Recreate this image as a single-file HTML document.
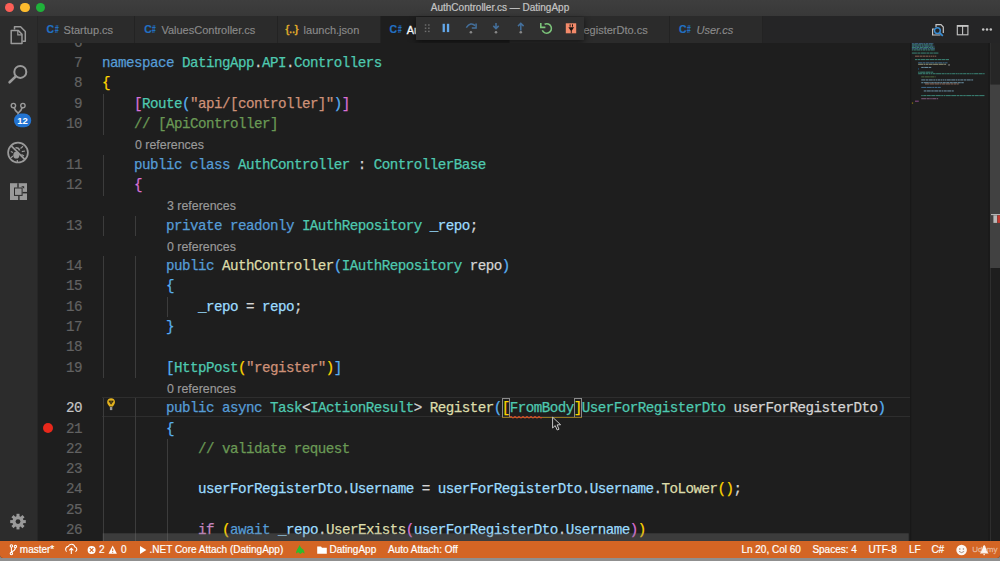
<!DOCTYPE html>
<html><head><meta charset="utf-8">
<style>
*{box-sizing:border-box}
html,body{margin:0;padding:0;width:1000px;height:561px;overflow:hidden;background:#8f8f8f;font-family:"Liberation Sans",sans-serif}
.abs{position:absolute}
svg{position:absolute;overflow:visible}
#win{position:absolute;left:0;top:0;width:1000px;height:558px;background:#1e1e1e;border-radius:0 0 3px 3px;overflow:hidden}
#title{left:0;top:0;width:1000px;height:16px;background:linear-gradient(#3e3e3e,#383838);color:#c4c4c4;font-size:10px;text-align:center;line-height:15px;-webkit-text-stroke:0.2px}
.tl{position:absolute;top:2.5px;width:9.6px;height:9.6px;border-radius:50%}
#act{left:0;top:16px;width:38px;height:525px;background:#2c2c2c;border-right:1px solid #262626}
#tabs{left:38px;top:16px;width:962px;height:27px;background:#252526}
.tab{position:absolute;top:0;height:27px;background:#2b2b2b;border-right:1px solid #232323;color:#8a8a8a;font-size:11px;line-height:29px;white-space:nowrap;overflow:hidden;-webkit-text-stroke:0.15px}
.tab .ic{position:absolute;top:0;font-size:10.5px;font-weight:bold;color:#2270c2;font-style:normal;letter-spacing:-0.4px;line-height:27.6px;-webkit-text-stroke:0.2px}
.tab .tx{position:absolute}
#editor{left:38px;top:43px;width:952px;height:498px;background:#1e1e1e;overflow:hidden}
.row{position:absolute;left:0;height:20.3px;line-height:20.3px;white-space:pre;font-family:"Liberation Mono",monospace;font-size:14.2px;letter-spacing:-0.52px;color:#d4d4d4;-webkit-text-stroke:0.25px}
.ln{position:absolute;left:0;width:44px;text-align:right;height:20.3px;line-height:20.3px;font-family:"Liberation Mono",monospace;font-size:14.2px;letter-spacing:-0.52px;color:#626262;-webkit-text-stroke:0.2px}
.lens{position:absolute;height:20.3px;line-height:22px;font-size:12.4px;color:#9a9a9a;white-space:pre;-webkit-text-stroke:0.15px}
.g{position:absolute;width:1px;background:#3c3c3c}
.k{color:#569cd6;-webkit-text-stroke-color:#569cd6}.t{color:#4ec9b0}.f{color:#dcdcaa}.v{color:#9cdcfe}.s{color:#ce9178}.c{color:#6a9955}.p{color:#c586c0}.w{color:#d4d4d4}
.y{color:#ffd700}.o{color:#da70d6}.b{color:#58b0f2}
#status{left:0;top:541px;width:1000px;height:17px;background:#d46524;color:#fff;font-size:10px;line-height:18.6px;white-space:nowrap}
#status .st{position:absolute;top:0;-webkit-text-stroke:0.2px}
</style></head><body>
<div id="win">

<!-- title bar -->
<div id="title" class="abs">AuthController.cs — DatingApp</div>
<div class="tl" style="left:4.6px;background:#fc5f57"></div>
<div class="tl" style="left:20.2px;background:#fdbc2e"></div>
<div class="tl" style="left:35.8px;background:#1fb23a"></div>

<!-- activity bar -->
<div id="act" class="abs"></div>

<svg width="38" height="525" style="left:0;top:0" viewBox="0 0 38 525">
</svg>
<svg width="1000" height="561" style="left:0;top:0;pointer-events:none">
  <!-- files -->
  <path d="M14.5,29.5 V26.8 H20.6 L25.3,31.5 V41.3 H22.5" fill="none" stroke="#9a9a9a" stroke-width="1.5" stroke-linejoin="round"/>
  <path d="M11.2,30.6 H18.4 L22,34.2 V43.4 H11.2 Z" fill="none" stroke="#9a9a9a" stroke-width="1.5" stroke-linejoin="round"/>
  <path d="M17.8,30.6 V34.8 H22" fill="none" stroke="#9a9a9a" stroke-width="1.2"/>
  <!-- search -->
  <circle cx="20.3" cy="71.9" r="6" fill="none" stroke="#9a9a9a" stroke-width="2"/>
  <path d="M15.8,76.4 L9.6,82.3" stroke="#9a9a9a" stroke-width="2.6" stroke-linecap="round"/>
  <!-- scm -->
  <circle cx="13.4" cy="105.6" r="2.2" fill="none" stroke="#9a9a9a" stroke-width="1.4"/>
  <circle cx="22.9" cy="105.6" r="2.2" fill="none" stroke="#9a9a9a" stroke-width="1.4"/>
  <path d="M14.2,107.8 Q15,111 18.1,113.2 M22.1,107.8 Q21.3,111 18.1,113.2 V118" fill="none" stroke="#9a9a9a" stroke-width="1.6"/>
  <rect x="14" y="113.6" width="17.2" height="13.6" rx="6.8" fill="#2374d2"/>
  <text x="22.6" y="124.2" font-family="Liberation Sans" font-weight="bold" font-size="9.5" fill="#fff" text-anchor="middle">12</text>
  <!-- debug -->
  <circle cx="18" cy="152.6" r="9.9" fill="none" stroke="#9a9a9a" stroke-width="1.7"/>
  <path d="M11,145.6 L25,159.6" stroke="#9a9a9a" stroke-width="1.7"/>
  <ellipse cx="16.3" cy="155.2" rx="3" ry="3.4" fill="#9a9a9a"/>
  <path d="M19.5,150.5 a3,3 0 0 0 -4,-2.5" fill="none" stroke="#9a9a9a" stroke-width="1.6"/>
  <path d="M20.5,148.5 L23,146.2 M21.8,151.6 L25,151 M21.5,154.5 L24,156 M13,152.5 L10.8,151.5 M12.8,156 L11,157.8 M17.2,160 L17.5,162" stroke="#9a9a9a" stroke-width="1.2"/>
  <!-- extensions -->
  <rect x="10" y="183.2" width="17" height="16.8" fill="#9a9a9a"/>
  <rect x="14" y="187.5" width="8.6" height="8.4" fill="#2c2c2c"/>
  <rect x="15" y="188.5" width="6.6" height="6.4" fill="#9a9a9a"/>
  <rect x="17.3" y="183.2" width="1.4" height="4.5" fill="#2c2c2c"/>
  <rect x="18.2" y="195.8" width="1.4" height="4.2" fill="#2c2c2c"/>
  <rect x="22.5" y="191.9" width="4.5" height="1.5" fill="#2c2c2c"/>
  <path d="M21.2,186.2 H24.2 V188.8 Z" fill="#2c2c2c"/>
  <!-- gear -->
  <g transform="translate(18,521.6)" fill="#9a9a9a">
    <circle r="5.6"/>
    <rect x="-1.5" y="-7.8" width="3" height="3.5" transform="rotate(0)"/><rect x="-1.5" y="-7.8" width="3" height="3.5" transform="rotate(45)"/><rect x="-1.5" y="-7.8" width="3" height="3.5" transform="rotate(90)"/><rect x="-1.5" y="-7.8" width="3" height="3.5" transform="rotate(135)"/><rect x="-1.5" y="-7.8" width="3" height="3.5" transform="rotate(180)"/><rect x="-1.5" y="-7.8" width="3" height="3.5" transform="rotate(225)"/><rect x="-1.5" y="-7.8" width="3" height="3.5" transform="rotate(270)"/><rect x="-1.5" y="-7.8" width="3" height="3.5" transform="rotate(315)"/>
    <circle r="2.4" fill="#2c2c2c"/>
  </g>
</svg>


<!-- tabs -->
<div id="tabs" class="abs">
  <div class="tab" style="left:0;width:97.4px"><span class="ic" style="left:8.6px">C<i style="display:inline-block;transform:scaleX(0.62);transform-origin:0 50%;font-style:normal;margin-left:1px">#</i></span><span class="tx" style="left:25.6px">Startup.cs</span></div>
  <div class="tab" style="left:97.4px;width:142.2px"><span class="ic" style="left:8.8px">C<i style="display:inline-block;transform:scaleX(0.62);transform-origin:0 50%;font-style:normal;margin-left:1px">#</i></span><span class="tx" style="left:26px">ValuesController.cs</span></div>
  <div class="tab" style="left:239.6px;width:103.1px"><span class="ic" style="left:8px;color:#e0ae2a;font-size:11px;letter-spacing:-0.2px;font-weight:normal;-webkit-text-stroke:0.5px">{..}</span><span class="tx" style="left:26px">launch.json</span></div>
  <div class="tab" style="left:342.7px;width:129.1px;background:#1e1e1e;color:#fff;-webkit-text-stroke:0.35px"><span class="ic" style="left:8.8px">C<i style="display:inline-block;transform:scaleX(0.62);transform-origin:0 50%;font-style:normal;margin-left:1px">#</i></span><span class="tx" style="left:26px">AuthController.cs</span></div>
  <div class="tab" style="left:471.8px;width:160.3px"><span class="ic" style="left:8.8px">C<i style="display:inline-block;transform:scaleX(0.62);transform-origin:0 50%;font-style:normal;margin-left:1px">#</i></span><span class="tx" style="left:26px">UserForRegisterDto.cs</span></div>
  <div class="tab" style="left:632.1px;width:93.1px;font-style:italic"><span class="ic" style="left:9px">C<i style="display:inline-block;transform:scaleX(0.62);transform-origin:0 50%;font-style:normal;margin-left:1px">#</i></span><span class="tx" style="left:26.4px">User.cs</span></div>
</div>

<svg width="1000" height="60" style="left:0;top:0">
  <path d="M936,27 V24.6 H941 L943.3,27 V33" fill="none" stroke="#c5c5c5" stroke-width="1.2"/>
  <path d="M932.6,29 H934 M932.6,28.5 V35 H940.5" fill="none" stroke="#c5c5c5" stroke-width="1.2"/>
  <circle cx="937.4" cy="30.6" r="2.9" fill="none" stroke="#3a8fd6" stroke-width="1.4"/>
  <path d="M939.5,32.7 L942.8,35.8" stroke="#3a8fd6" stroke-width="1.7"/>
  <rect x="957.3" y="25.6" width="10.6" height="9.2" fill="none" stroke="#c5c5c5" stroke-width="1.1"/>
  <rect x="957" y="25" width="11.2" height="1.8" fill="#c5c5c5"/>
  <path d="M962.6,26 V34.8" stroke="#c5c5c5" stroke-width="1.1"/>
  <circle cx="983.2" cy="29.6" r="1.25" fill="#c5c5c5"/>
  <circle cx="987" cy="29.6" r="1.25" fill="#c5c5c5"/>
  <circle cx="990.8" cy="29.6" r="1.25" fill="#c5c5c5"/>
</svg>


<div class="abs" style="left:415.5px;top:16.6px;width:168.2px;height:23.8px;background:#303030;box-shadow:0 2px 6px rgba(0,0,0,0.55)"></div>
<svg width="1000" height="60" style="left:0;top:0">
  <g fill="#707070">
    <rect x="424.8" y="24.3" width="1.5" height="1.4"/><rect x="428.1" y="24.3" width="1.5" height="1.4"/>
    <rect x="424.8" y="27.5" width="1.5" height="1.4"/><rect x="428.1" y="27.5" width="1.5" height="1.4"/>
    <rect x="424.8" y="30.7" width="1.5" height="1.4"/><rect x="428.1" y="30.7" width="1.5" height="1.4"/>
  </g>
  <rect x="442.6" y="23.8" width="2.3" height="8.3" fill="#62a8ec"/>
  <rect x="446.9" y="23.8" width="2.3" height="8.3" fill="#62a8ec"/>
  <g fill="none" stroke="#44709c" stroke-width="1.5">
  <path d="M466.3,27.6 Q470.6,21.4 475.2,25.6"/>
  <path d="M476.1,23.4 V27.9 H471.8"/>
  <path d="M496,22.9 V28.4 M493.3,25.9 L496,28.6 L498.7,25.9"/>
  <path d="M520.8,23.6 V30.4 M518,26.1 L520.8,23.3 L523.6,26.1"/>
  </g>
  <circle cx="470.9" cy="32.2" r="1.3" fill="#888"/>
  <circle cx="496" cy="32.2" r="1.3" fill="#888"/>
  <circle cx="520.8" cy="32.2" r="1.3" fill="#888"/>
  <!-- restart -->
  <path d="M542.3,30.3 A4.75,4.75 0 1 0 544.6,24.2" fill="none" stroke="#7cc47a" stroke-width="1.6"/>
  <path d="M540.8,23 V27.4 H545.4" fill="none" stroke="#7cc47a" stroke-width="1.6"/>
  <!-- disconnect -->
  <rect x="565.8" y="23.3" width="10.4" height="10" fill="#f38a6a"/>
  <rect x="569.6" y="24.4" width="1" height="2.2" fill="#1a1210"/><rect x="572" y="24.4" width="1" height="2.2" fill="#1a1210"/>
  <path d="M568.4,27.2 H574.1 L571.25,31.6 Z" fill="#1a1210"/>
  <rect x="570.8" y="31" width="0.9" height="2.3" fill="#1a1210"/>
</svg>


<!-- editor -->
<div id="editor" class="abs">
<div class="abs" style="left:64px;top:354px;width:808px;height:20px;border-top:1px solid #2e2e2e;border-bottom:1px solid #2e2e2e"></div>
<div class="g" style="left:64.5px;top:50.75px;height:20.6px"></div>
<div class="g" style="left:64.5px;top:71.05px;height:20.6px"></div>
<div class="g" style="left:64.5px;top:111.65px;height:20.6px"></div>
<div class="g" style="left:64.5px;top:131.95px;height:20.6px"></div>
<div class="g" style="left:64.5px;top:172.55px;height:20.6px"></div>
<div class="g" style="left:96.5px;top:172.55px;height:20.6px"></div>
<div class="g" style="left:64.5px;top:213.15px;height:20.6px"></div>
<div class="g" style="left:96.5px;top:213.15px;height:20.6px"></div>
<div class="g" style="left:64.5px;top:233.45px;height:20.6px"></div>
<div class="g" style="left:96.5px;top:233.45px;height:20.6px"></div>
<div class="g" style="left:64.5px;top:253.75px;height:20.6px"></div>
<div class="g" style="left:96.5px;top:253.75px;height:20.6px"></div>
<div class="g" style="left:128.5px;top:253.75px;height:20.6px"></div>
<div class="g" style="left:64.5px;top:274.05px;height:20.6px"></div>
<div class="g" style="left:96.5px;top:274.05px;height:20.6px"></div>
<div class="g" style="left:64.5px;top:294.35px;height:20.6px"></div>
<div class="g" style="left:96.5px;top:294.35px;height:20.6px"></div>
<div class="g" style="left:64.5px;top:314.65px;height:20.6px"></div>
<div class="g" style="left:96.5px;top:314.65px;height:20.6px"></div>
<div class="g" style="left:64.5px;top:355.25px;height:20.6px"></div>
<div class="g" style="left:96.5px;top:355.25px;height:20.6px"></div>
<div class="g" style="left:64.5px;top:375.55px;height:20.6px"></div>
<div class="g" style="left:96.5px;top:375.55px;height:20.6px"></div>
<div class="g" style="left:64.5px;top:395.85px;height:20.6px"></div>
<div class="g" style="left:96.5px;top:395.85px;height:20.6px"></div>
<div class="g" style="left:128.5px;top:395.85px;height:20.6px"></div>
<div class="g" style="left:64.5px;top:416.15px;height:20.6px"></div>
<div class="g" style="left:96.5px;top:416.15px;height:20.6px"></div>
<div class="g" style="left:128.5px;top:416.15px;height:20.6px"></div>
<div class="g" style="left:64.5px;top:436.45px;height:20.6px"></div>
<div class="g" style="left:96.5px;top:436.45px;height:20.6px"></div>
<div class="g" style="left:128.5px;top:436.45px;height:20.6px"></div>
<div class="g" style="left:64.5px;top:456.75px;height:20.6px"></div>
<div class="g" style="left:96.5px;top:456.75px;height:20.6px"></div>
<div class="g" style="left:128.5px;top:456.75px;height:20.6px"></div>
<div class="g" style="left:64.5px;top:477.05px;height:20.6px"></div>
<div class="g" style="left:96.5px;top:477.05px;height:20.6px"></div>
<div class="g" style="left:128.5px;top:477.05px;height:20.6px"></div>
<div class="ln" style="top:-10.15px;">6</div>
<div class="ln" style="top:10.15px;">7</div>
<div class="row" style="left:64px;top:10.15px"><span class=k>namespace</span> <span class=t>DatingApp</span>.<span class=t>API</span>.<span class=t>Controllers</span></div>
<div class="ln" style="top:30.45px;">8</div>
<div class="row" style="left:64px;top:30.45px"><span class=y>{</span></div>
<div class="ln" style="top:50.75px;">9</div>
<div class="row" style="left:64px;top:50.75px">    <span class=o>[</span><span class=t>Route</span><span class=b>(</span><span class=s>"api/[controller]"</span><span class=b>)</span><span class=o>]</span></div>
<div class="ln" style="top:71.05px;">10</div>
<div class="row" style="left:64px;top:71.05px">    <span class=c>// [ApiController]</span></div>
<div class="lens" style="left:97.0px;top:91.35px">0 references</div>
<div class="ln" style="top:111.65px;">11</div>
<div class="row" style="left:64px;top:111.65px">    <span class=k>public</span> <span class=k>class</span> <span class=t>AuthController</span> : <span class=t>ControllerBase</span></div>
<div class="ln" style="top:131.95px;">12</div>
<div class="row" style="left:64px;top:131.95px">    <span class=o>{</span></div>
<div class="lens" style="left:129.0px;top:152.25px">3 references</div>
<div class="ln" style="top:172.55px;">13</div>
<div class="row" style="left:64px;top:172.55px">        <span class=k>private</span> <span class=k>readonly</span> <span class=t>IAuthRepository</span> <span class=v>_repo</span>;</div>
<div class="lens" style="left:129.0px;top:192.85px">0 references</div>
<div class="ln" style="top:213.15px;">14</div>
<div class="row" style="left:64px;top:213.15px">        <span class=k>public</span> <span class=f>AuthController</span><span class=b>(</span><span class=t>IAuthRepository</span> <span class=w>repo</span><span class=b>)</span></div>
<div class="ln" style="top:233.45px;">15</div>
<div class="row" style="left:64px;top:233.45px">        <span class=b>{</span></div>
<div class="ln" style="top:253.75px;">16</div>
<div class="row" style="left:64px;top:253.75px">            <span class=v>_repo</span> = <span class=v>repo</span>;</div>
<div class="ln" style="top:274.05px;">17</div>
<div class="row" style="left:64px;top:274.05px">        <span class=b>}</span></div>
<div class="ln" style="top:294.35px;">18</div>
<div class="ln" style="top:314.65px;">19</div>
<div class="row" style="left:64px;top:314.65px">        <span class=b>[</span><span class=t>HttpPost</span><span class=y>(</span><span class=s>"register"</span><span class=y>)</span><span class=b>]</span></div>
<div class="lens" style="left:129.0px;top:334.95px">0 references</div>
<div class="ln" style="top:355.25px;color:#c6c6c6">20</div>
<div class="row" style="left:64px;top:355.25px">        <span class=k>public</span> <span class=k>async</span> <span class=t>Task</span>&lt;<span class=t>IActionResult</span>&gt; <span class=f>Register</span><span class=b>(</span><span class=y>[</span><span class=t>FromBody</span><span class=y>]</span><span class=t>UserForRegisterDto</span> <span class=w>userForRegisterDto</span><span class=b>)</span></div>
<div class="ln" style="top:375.55px;">21</div>
<div class="row" style="left:64px;top:375.55px">        <span class=b>{</span></div>
<div class="ln" style="top:395.85px;">22</div>
<div class="row" style="left:64px;top:395.85px">            <span class=c>// validate request</span></div>
<div class="ln" style="top:416.15px;">23</div>
<div class="ln" style="top:436.45px;">24</div>
<div class="row" style="left:64px;top:436.45px">            <span class=v>userForRegisterDto</span>.<span class=v>Username</span> = <span class=v>userForRegisterDto</span>.<span class=v>Username</span>.<span class=f>ToLower</span><span class=y>()</span>;</div>
<div class="ln" style="top:456.75px;">25</div>
<div class="ln" style="top:477.05px;">26</div>
<div class="row" style="left:64px;top:477.05px">            <span class=p>if</span> <span class=y>(</span><span class=k>await</span> <span class=v>_repo</span>.<span class=f>UserExists</span><span class=o>(</span><span class=v>userForRegisterDto</span>.<span class=v>Username</span><span class=o>)</span><span class=y>)</span></div>
<div class="abs" style="left:4.600000000000001px;top:380px;width:10px;height:10px;border-radius:50%;background:#e8281b"></div>
<svg width="1000" height="561" style="left:-38px;top:-43px"><path d="M108.5,405.2 C106.4,403.2 106.6,398.3 111.1,398.3 C115.6,398.3 115.8,403.2 113.7,405.2 L112.9,406.5 H109.3 Z" fill="#e3b21e"/><path d="M108.9,400.9 H113.3 L111.1,404.3 Z" fill="#2a2412" stroke="#2a2412" stroke-width="0.6" stroke-linejoin="round"/><circle cx="111.1" cy="401.9" r="0.55" fill="#b89020"/><rect x="109.9" y="407" width="2.4" height="3.1" fill="#9a9a9a"/></svg>
<div class="abs" style="left:464.2px;top:354.5px;width:8px;height:20px;border:1px solid #8a8a8a"></div>
<div class="abs" style="left:536.2px;top:354.5px;width:7.6px;height:20px;border:1px solid #8a8a8a"></div>
<div class="abs" style="left:464.2px;top:374px;width:79.4px;height:1px;background:#917520"></div>
<svg width="1000" height="561" style="left:-38px;top:-43px"><path d="M510,417.2 q1,-1.4 2,0 q1,1.4 2,0 q1,-1.4 2,0 q1,1.4 2,0 q1,-1.4 2,0 q1,1.4 2,0 q1,-1.4 2,0 q1,1.4 2,0 q1,-1.4 2,0 q1,1.4 2,0 q1,-1.4 2,0 q1,1.4 2,0 q1,-1.4 2,0 q1,1.4 2,0 q1,-1.4 2,0 q1,1.4 2,0" fill="none" stroke="#d9482b" stroke-width="1.1"/></svg>
</div>
<svg width="1000" height="561" style="left:0;top:0">
<rect x="910" y="43" width="1.2" height="498" fill="#181818"/>
<rect x="911.88" y="43.15" width="2.00" height="1.1" fill="#569cd6" opacity="0.55"/>
<rect x="914.38" y="43.15" width="4.00" height="1.1" fill="#569cd6" opacity="0.55"/>
<rect x="918.88" y="43.15" width="4.00" height="1.1" fill="#569cd6" opacity="0.55"/>
<rect x="923.38" y="43.15" width="2.00" height="1.1" fill="#569cd6" opacity="0.55"/>
<rect x="925.88" y="43.15" width="2.50" height="1.1" fill="#569cd6" opacity="0.55"/>
<rect x="928.88" y="43.15" width="4.00" height="1.1" fill="#569cd6" opacity="0.55"/>
<rect x="933.38" y="43.15" width="0.38" height="1.1" fill="#569cd6" opacity="0.55"/>
<rect x="911.88" y="44.40" width="5.00" height="1.1" fill="#4ec9b0" opacity="0.55"/>
<rect x="917.38" y="44.40" width="4.00" height="1.1" fill="#4ec9b0" opacity="0.55"/>
<rect x="921.88" y="44.40" width="1.50" height="1.1" fill="#4ec9b0" opacity="0.55"/>
<rect x="923.88" y="44.40" width="4.00" height="1.1" fill="#4ec9b0" opacity="0.55"/>
<rect x="928.38" y="44.40" width="1.50" height="1.1" fill="#4ec9b0" opacity="0.55"/>
<rect x="930.38" y="44.40" width="2.12" height="1.1" fill="#4ec9b0" opacity="0.55"/>
<rect x="911.88" y="45.65" width="2.50" height="1.1" fill="#569cd6" opacity="0.55"/>
<rect x="914.88" y="45.65" width="4.00" height="1.1" fill="#569cd6" opacity="0.55"/>
<rect x="919.38" y="45.65" width="2.00" height="1.1" fill="#569cd6" opacity="0.55"/>
<rect x="921.88" y="45.65" width="2.00" height="1.1" fill="#569cd6" opacity="0.55"/>
<rect x="924.38" y="45.65" width="5.00" height="1.1" fill="#569cd6" opacity="0.55"/>
<rect x="929.88" y="45.65" width="3.00" height="1.1" fill="#569cd6" opacity="0.55"/>
<rect x="933.38" y="45.65" width="1.00" height="1.1" fill="#569cd6" opacity="0.55"/>
<rect x="911.88" y="46.90" width="4.00" height="1.1" fill="#4ec9b0" opacity="0.55"/>
<rect x="916.38" y="46.90" width="3.00" height="1.1" fill="#4ec9b0" opacity="0.55"/>
<rect x="919.88" y="46.90" width="3.00" height="1.1" fill="#4ec9b0" opacity="0.55"/>
<rect x="923.38" y="46.90" width="5.00" height="1.1" fill="#4ec9b0" opacity="0.55"/>
<rect x="928.88" y="46.90" width="2.00" height="1.1" fill="#4ec9b0" opacity="0.55"/>
<rect x="931.38" y="46.90" width="2.00" height="1.1" fill="#4ec9b0" opacity="0.55"/>
<rect x="933.88" y="46.90" width="0.50" height="1.1" fill="#4ec9b0" opacity="0.55"/>
<rect x="911.88" y="48.15" width="2.00" height="1.1" fill="#569cd6" opacity="0.55"/>
<rect x="914.38" y="48.15" width="4.00" height="1.1" fill="#569cd6" opacity="0.55"/>
<rect x="918.88" y="48.15" width="3.00" height="1.1" fill="#569cd6" opacity="0.55"/>
<rect x="922.38" y="48.15" width="5.00" height="1.1" fill="#569cd6" opacity="0.55"/>
<rect x="927.88" y="48.15" width="1.50" height="1.1" fill="#569cd6" opacity="0.55"/>
<rect x="929.88" y="48.15" width="5.00" height="1.1" fill="#569cd6" opacity="0.55"/>
<rect x="911.88" y="49.40" width="1.50" height="1.1" fill="#4ec9b0" opacity="0.55"/>
<rect x="913.88" y="49.40" width="2.00" height="1.1" fill="#4ec9b0" opacity="0.55"/>
<rect x="916.38" y="49.40" width="4.00" height="1.1" fill="#4ec9b0" opacity="0.55"/>
<rect x="920.88" y="49.40" width="1.50" height="1.1" fill="#4ec9b0" opacity="0.55"/>
<rect x="922.88" y="49.40" width="2.50" height="1.1" fill="#4ec9b0" opacity="0.55"/>
<rect x="925.88" y="49.40" width="1.50" height="1.1" fill="#4ec9b0" opacity="0.55"/>
<rect x="927.88" y="49.40" width="2.50" height="1.1" fill="#4ec9b0" opacity="0.55"/>
<rect x="930.88" y="49.40" width="3.00" height="1.1" fill="#4ec9b0" opacity="0.55"/>
<rect x="934.38" y="49.40" width="0.62" height="1.1" fill="#4ec9b0" opacity="0.55"/>
<rect x="911.88" y="52.52" width="5.00" height="1.1" fill="#4ec9b0" opacity="0.55"/>
<rect x="917.38" y="52.52" width="3.00" height="1.1" fill="#4ec9b0" opacity="0.55"/>
<rect x="920.88" y="52.52" width="5.00" height="1.1" fill="#4ec9b0" opacity="0.55"/>
<rect x="926.38" y="52.52" width="3.00" height="1.1" fill="#4ec9b0" opacity="0.55"/>
<rect x="929.88" y="52.52" width="3.00" height="1.1" fill="#4ec9b0" opacity="0.55"/>
<rect x="933.38" y="52.52" width="5.00" height="1.1" fill="#4ec9b0" opacity="0.55"/>
<rect x="915.00" y="55.65" width="4.00" height="1.1" fill="#ce9178" opacity="0.55"/>
<rect x="919.50" y="55.65" width="3.00" height="1.1" fill="#ce9178" opacity="0.55"/>
<rect x="923.00" y="55.65" width="2.00" height="1.1" fill="#ce9178" opacity="0.55"/>
<rect x="925.50" y="55.65" width="2.50" height="1.1" fill="#ce9178" opacity="0.55"/>
<rect x="928.50" y="55.65" width="1.50" height="1.1" fill="#ce9178" opacity="0.55"/>
<rect x="930.50" y="55.65" width="1.50" height="1.1" fill="#ce9178" opacity="0.55"/>
<rect x="932.50" y="55.65" width="2.00" height="1.1" fill="#ce9178" opacity="0.55"/>
<rect x="935.00" y="55.65" width="1.25" height="1.1" fill="#ce9178" opacity="0.55"/>
<rect x="915.00" y="59.02" width="2.00" height="1.1" fill="#4ec9b0" opacity="0.55"/>
<rect x="917.50" y="59.02" width="2.50" height="1.1" fill="#4ec9b0" opacity="0.55"/>
<rect x="920.50" y="59.02" width="5.00" height="1.1" fill="#4ec9b0" opacity="0.55"/>
<rect x="926.00" y="59.02" width="3.00" height="1.1" fill="#4ec9b0" opacity="0.55"/>
<rect x="929.50" y="59.02" width="5.00" height="1.1" fill="#4ec9b0" opacity="0.55"/>
<rect x="935.00" y="59.02" width="2.50" height="1.1" fill="#4ec9b0" opacity="0.55"/>
<rect x="938.00" y="59.02" width="3.00" height="1.1" fill="#4ec9b0" opacity="0.55"/>
<rect x="941.50" y="59.02" width="4.00" height="1.1" fill="#4ec9b0" opacity="0.55"/>
<rect x="946.00" y="59.02" width="3.00" height="1.1" fill="#4ec9b0" opacity="0.55"/>
<rect x="918.12" y="62.27" width="4.00" height="1.1" fill="#569cd6" opacity="0.55"/>
<rect x="922.62" y="62.27" width="2.50" height="1.1" fill="#569cd6" opacity="0.55"/>
<rect x="925.62" y="62.27" width="4.00" height="1.1" fill="#569cd6" opacity="0.55"/>
<rect x="930.12" y="62.27" width="4.00" height="1.1" fill="#569cd6" opacity="0.55"/>
<rect x="934.62" y="62.27" width="3.00" height="1.1" fill="#569cd6" opacity="0.55"/>
<rect x="938.12" y="62.27" width="4.00" height="1.1" fill="#569cd6" opacity="0.55"/>
<rect x="942.62" y="62.27" width="2.00" height="1.1" fill="#569cd6" opacity="0.55"/>
<rect x="945.12" y="62.27" width="2.38" height="1.1" fill="#569cd6" opacity="0.55"/>
<rect x="918.12" y="63.77" width="5.00" height="1.1" fill="#dcdcaa" opacity="0.55"/>
<rect x="923.62" y="63.77" width="1.50" height="1.1" fill="#dcdcaa" opacity="0.55"/>
<rect x="925.62" y="63.77" width="2.50" height="1.1" fill="#dcdcaa" opacity="0.55"/>
<rect x="928.62" y="63.77" width="4.00" height="1.1" fill="#dcdcaa" opacity="0.55"/>
<rect x="933.12" y="63.77" width="5.00" height="1.1" fill="#dcdcaa" opacity="0.55"/>
<rect x="938.62" y="63.77" width="5.00" height="1.1" fill="#dcdcaa" opacity="0.55"/>
<rect x="944.12" y="63.77" width="2.00" height="1.1" fill="#dcdcaa" opacity="0.55"/>
<rect x="948.12" y="64.40" width="1.88" height="1.1" fill="#d4d4d4" opacity="0.55"/>
<rect x="921.25" y="66.90" width="2.50" height="1.1" fill="#9cdcfe" opacity="0.55"/>
<rect x="924.25" y="66.90" width="4.00" height="1.1" fill="#9cdcfe" opacity="0.55"/>
<rect x="928.75" y="66.90" width="2.50" height="1.1" fill="#9cdcfe" opacity="0.55"/>
<rect x="918.12" y="68.40" width="0.88" height="1.1" fill="#179fff" opacity="0.55"/>
<rect x="918.12" y="71.65" width="1.50" height="1.1" fill="#4ec9b0" opacity="0.55"/>
<rect x="920.12" y="71.65" width="5.00" height="1.1" fill="#4ec9b0" opacity="0.55"/>
<rect x="925.62" y="71.65" width="5.00" height="1.1" fill="#4ec9b0" opacity="0.55"/>
<rect x="931.12" y="71.65" width="2.00" height="1.1" fill="#4ec9b0" opacity="0.55"/>
<rect x="933.62" y="71.65" width="0.12" height="1.1" fill="#4ec9b0" opacity="0.55"/>
<rect x="918.12" y="73.15" width="4.00" height="1.1" fill="#4ec9b0" opacity="0.55"/>
<rect x="922.62" y="73.15" width="2.50" height="1.1" fill="#4ec9b0" opacity="0.55"/>
<rect x="925.62" y="73.15" width="2.50" height="1.1" fill="#4ec9b0" opacity="0.55"/>
<rect x="928.62" y="73.15" width="1.50" height="1.1" fill="#4ec9b0" opacity="0.55"/>
<rect x="930.62" y="73.15" width="1.50" height="1.1" fill="#4ec9b0" opacity="0.55"/>
<rect x="932.62" y="73.15" width="3.00" height="1.1" fill="#4ec9b0" opacity="0.55"/>
<rect x="936.12" y="73.15" width="5.00" height="1.1" fill="#4ec9b0" opacity="0.55"/>
<rect x="941.62" y="73.15" width="3.00" height="1.1" fill="#4ec9b0" opacity="0.55"/>
<rect x="945.12" y="73.15" width="1.50" height="1.1" fill="#4ec9b0" opacity="0.55"/>
<rect x="947.12" y="73.15" width="2.50" height="1.1" fill="#4ec9b0" opacity="0.55"/>
<rect x="950.12" y="73.15" width="1.50" height="1.1" fill="#4ec9b0" opacity="0.55"/>
<rect x="952.12" y="73.15" width="3.00" height="1.1" fill="#4ec9b0" opacity="0.55"/>
<rect x="955.62" y="73.15" width="2.00" height="1.1" fill="#4ec9b0" opacity="0.55"/>
<rect x="958.12" y="73.15" width="1.50" height="1.1" fill="#4ec9b0" opacity="0.55"/>
<rect x="960.12" y="73.15" width="2.50" height="1.1" fill="#4ec9b0" opacity="0.55"/>
<rect x="963.12" y="73.15" width="3.00" height="1.1" fill="#4ec9b0" opacity="0.55"/>
<rect x="966.62" y="73.15" width="3.00" height="1.1" fill="#4ec9b0" opacity="0.55"/>
<rect x="970.12" y="73.15" width="1.50" height="1.1" fill="#4ec9b0" opacity="0.55"/>
<rect x="972.12" y="73.15" width="1.50" height="1.1" fill="#4ec9b0" opacity="0.55"/>
<rect x="974.12" y="73.15" width="4.00" height="1.1" fill="#4ec9b0" opacity="0.55"/>
<rect x="978.62" y="73.15" width="4.00" height="1.1" fill="#4ec9b0" opacity="0.55"/>
<rect x="983.12" y="73.15" width="1.50" height="1.1" fill="#4ec9b0" opacity="0.55"/>
<rect x="921.25" y="76.28" width="3.00" height="1.1" fill="#6a9955" opacity="0.55"/>
<rect x="924.75" y="76.28" width="5.00" height="1.1" fill="#6a9955" opacity="0.55"/>
<rect x="930.25" y="76.28" width="4.00" height="1.1" fill="#6a9955" opacity="0.55"/>
<rect x="934.75" y="76.28" width="0.88" height="1.1" fill="#6a9955" opacity="0.55"/>
<rect x="921.25" y="79.40" width="4.00" height="1.1" fill="#9cdcfe" opacity="0.55"/>
<rect x="925.75" y="79.40" width="2.50" height="1.1" fill="#9cdcfe" opacity="0.55"/>
<rect x="928.75" y="79.40" width="4.00" height="1.1" fill="#9cdcfe" opacity="0.55"/>
<rect x="933.25" y="79.40" width="2.00" height="1.1" fill="#9cdcfe" opacity="0.55"/>
<rect x="935.75" y="79.40" width="1.50" height="1.1" fill="#9cdcfe" opacity="0.55"/>
<rect x="937.75" y="79.40" width="2.50" height="1.1" fill="#9cdcfe" opacity="0.55"/>
<rect x="940.75" y="79.40" width="1.50" height="1.1" fill="#9cdcfe" opacity="0.55"/>
<rect x="942.75" y="79.40" width="1.50" height="1.1" fill="#9cdcfe" opacity="0.55"/>
<rect x="944.75" y="79.40" width="1.50" height="1.1" fill="#9cdcfe" opacity="0.55"/>
<rect x="946.75" y="79.40" width="4.00" height="1.1" fill="#9cdcfe" opacity="0.55"/>
<rect x="951.25" y="79.40" width="4.00" height="1.1" fill="#9cdcfe" opacity="0.55"/>
<rect x="955.75" y="79.40" width="1.50" height="1.1" fill="#9cdcfe" opacity="0.55"/>
<rect x="957.75" y="79.40" width="2.00" height="1.1" fill="#9cdcfe" opacity="0.55"/>
<rect x="960.25" y="79.40" width="3.00" height="1.1" fill="#9cdcfe" opacity="0.55"/>
<rect x="963.75" y="79.40" width="2.50" height="1.1" fill="#9cdcfe" opacity="0.55"/>
<rect x="966.75" y="79.40" width="4.00" height="1.1" fill="#9cdcfe" opacity="0.55"/>
<rect x="971.25" y="79.40" width="1.88" height="1.1" fill="#9cdcfe" opacity="0.55"/>
<rect x="921.25" y="82.15" width="2.00" height="1.1" fill="#9cdcfe" opacity="0.55"/>
<rect x="923.75" y="82.15" width="5.00" height="1.1" fill="#9cdcfe" opacity="0.55"/>
<rect x="929.25" y="82.15" width="1.50" height="1.1" fill="#9cdcfe" opacity="0.55"/>
<rect x="931.25" y="82.15" width="2.50" height="1.1" fill="#9cdcfe" opacity="0.55"/>
<rect x="934.25" y="82.15" width="2.50" height="1.1" fill="#9cdcfe" opacity="0.55"/>
<rect x="937.25" y="82.15" width="2.50" height="1.1" fill="#9cdcfe" opacity="0.55"/>
<rect x="940.25" y="82.15" width="2.00" height="1.1" fill="#9cdcfe" opacity="0.55"/>
<rect x="942.75" y="82.15" width="3.00" height="1.1" fill="#9cdcfe" opacity="0.55"/>
<rect x="946.25" y="82.15" width="3.00" height="1.1" fill="#9cdcfe" opacity="0.55"/>
<rect x="949.75" y="82.15" width="3.00" height="1.1" fill="#9cdcfe" opacity="0.55"/>
<rect x="953.25" y="82.15" width="4.00" height="1.1" fill="#9cdcfe" opacity="0.55"/>
<rect x="957.75" y="82.15" width="3.00" height="1.1" fill="#9cdcfe" opacity="0.55"/>
<rect x="961.25" y="82.15" width="2.50" height="1.1" fill="#9cdcfe" opacity="0.55"/>
<rect x="925.00" y="83.40" width="4.00" height="1.1" fill="#ce9178" opacity="0.55"/>
<rect x="929.50" y="83.40" width="5.00" height="1.1" fill="#ce9178" opacity="0.55"/>
<rect x="935.00" y="83.40" width="4.00" height="1.1" fill="#ce9178" opacity="0.55"/>
<rect x="939.50" y="83.40" width="1.50" height="1.1" fill="#ce9178" opacity="0.55"/>
<rect x="941.50" y="83.40" width="4.00" height="1.1" fill="#ce9178" opacity="0.55"/>
<rect x="946.00" y="83.40" width="4.00" height="1.1" fill="#ce9178" opacity="0.55"/>
<rect x="950.50" y="83.40" width="2.50" height="1.1" fill="#ce9178" opacity="0.55"/>
<rect x="953.50" y="83.40" width="3.00" height="1.1" fill="#ce9178" opacity="0.55"/>
<rect x="957.00" y="83.40" width="1.75" height="1.1" fill="#ce9178" opacity="0.55"/>
<rect x="921.25" y="86.90" width="5.00" height="1.1" fill="#569cd6" opacity="0.55"/>
<rect x="926.75" y="86.90" width="5.00" height="1.1" fill="#569cd6" opacity="0.55"/>
<rect x="932.25" y="86.90" width="2.00" height="1.1" fill="#569cd6" opacity="0.55"/>
<rect x="934.75" y="86.90" width="2.50" height="1.1" fill="#569cd6" opacity="0.55"/>
<rect x="937.75" y="86.90" width="3.00" height="1.1" fill="#569cd6" opacity="0.55"/>
<rect x="923.75" y="90.40" width="2.50" height="1.1" fill="#9cdcfe" opacity="0.55"/>
<rect x="926.75" y="90.40" width="4.00" height="1.1" fill="#9cdcfe" opacity="0.55"/>
<rect x="931.25" y="90.40" width="2.50" height="1.1" fill="#9cdcfe" opacity="0.55"/>
<rect x="934.25" y="90.40" width="4.00" height="1.1" fill="#9cdcfe" opacity="0.55"/>
<rect x="938.75" y="90.40" width="2.50" height="1.1" fill="#9cdcfe" opacity="0.55"/>
<rect x="941.75" y="90.40" width="1.50" height="1.1" fill="#9cdcfe" opacity="0.55"/>
<rect x="943.75" y="90.40" width="3.00" height="1.1" fill="#9cdcfe" opacity="0.55"/>
<rect x="947.25" y="90.40" width="4.00" height="1.1" fill="#9cdcfe" opacity="0.55"/>
<rect x="951.75" y="90.40" width="2.00" height="1.1" fill="#9cdcfe" opacity="0.55"/>
<rect x="921.25" y="95.03" width="1.50" height="1.1" fill="#4ec9b0" opacity="0.55"/>
<rect x="923.25" y="95.03" width="3.00" height="1.1" fill="#4ec9b0" opacity="0.55"/>
<rect x="926.75" y="95.03" width="4.00" height="1.1" fill="#4ec9b0" opacity="0.55"/>
<rect x="931.25" y="95.03" width="4.00" height="1.1" fill="#4ec9b0" opacity="0.55"/>
<rect x="935.75" y="95.03" width="5.00" height="1.1" fill="#4ec9b0" opacity="0.55"/>
<rect x="941.25" y="95.03" width="2.00" height="1.1" fill="#4ec9b0" opacity="0.55"/>
<rect x="943.75" y="95.03" width="1.50" height="1.1" fill="#4ec9b0" opacity="0.55"/>
<rect x="945.75" y="95.03" width="5.00" height="1.1" fill="#4ec9b0" opacity="0.55"/>
<rect x="951.25" y="95.03" width="5.00" height="1.1" fill="#4ec9b0" opacity="0.55"/>
<rect x="956.75" y="95.03" width="2.50" height="1.1" fill="#4ec9b0" opacity="0.55"/>
<rect x="959.75" y="95.03" width="3.00" height="1.1" fill="#4ec9b0" opacity="0.55"/>
<rect x="963.25" y="95.03" width="2.50" height="1.1" fill="#4ec9b0" opacity="0.55"/>
<rect x="966.25" y="95.03" width="5.00" height="1.1" fill="#4ec9b0" opacity="0.55"/>
<rect x="971.75" y="95.03" width="2.50" height="1.1" fill="#4ec9b0" opacity="0.55"/>
<rect x="974.75" y="95.03" width="4.00" height="1.1" fill="#4ec9b0" opacity="0.55"/>
<rect x="979.25" y="95.03" width="5.00" height="1.1" fill="#4ec9b0" opacity="0.55"/>
<rect x="984.75" y="95.03" width="0.25" height="1.1" fill="#4ec9b0" opacity="0.55"/>
<rect x="921.25" y="98.15" width="5.00" height="1.1" fill="#c586c0" opacity="0.55"/>
<rect x="926.75" y="98.15" width="3.00" height="1.1" fill="#c586c0" opacity="0.55"/>
<rect x="930.25" y="98.15" width="1.50" height="1.1" fill="#c586c0" opacity="0.55"/>
<rect x="932.25" y="98.15" width="4.00" height="1.1" fill="#c586c0" opacity="0.55"/>
<rect x="936.75" y="98.15" width="1.38" height="1.1" fill="#c586c0" opacity="0.55"/>
<rect x="915.00" y="100.65" width="3.75" height="1.1" fill="#da70d6" opacity="0.55"/>
<rect x="911.88" y="102.53" width="1.25" height="1.1" fill="#ffd700" opacity="0.55"/>
<rect x="988.4" y="43" width="1.6" height="498" fill="#1a1a1a"/>
<rect x="990" y="43" width="1" height="498" fill="#2e2e2e"/>
<rect x="991" y="43" width="9" height="41.5" fill="#262626"/>
<rect x="990" y="84.5" width="10" height="183.5" fill="#414141"/>
<rect x="991" y="214.2" width="9" height="0.9" fill="#d0d0d0"/>
<rect x="993.4" y="215.3" width="3.6" height="7.6" fill="#b8b8b8"/>
<rect x="997.4" y="215.3" width="2.6" height="7.6" fill="#c43a30"/>
<rect x="102.7" y="533.3" width="806" height="7.7" fill="rgb(121,121,121)" opacity="0.33"/>
</svg>

<!-- status bar -->
<div id="status" class="abs">

<svg width="1000" height="17" style="left:0;top:0">
  <g fill="none" stroke="#fff" stroke-width="1.1">
    <circle cx="11.4" cy="5" r="1.2"/><circle cx="11.4" cy="12.6" r="1.2"/><circle cx="15.4" cy="5.6" r="1.2"/>
    <path d="M11.4,6.2 V11.4 M15.4,6.8 Q15.2,9.5 11.6,10.8"/>
  </g>
  <path d="M66.6,10.6 a3,3 0 0 1 1.6,-5.2 a3.6,3.6 0 0 1 6.8,0.6 a2.4,2.4 0 0 1 0.2,4.6" fill="none" stroke="#fff" stroke-width="1.1"/>
  <path d="M71.3,13 V7.6 M69.3,9.4 L71.3,7.3 L73.3,9.4" fill="none" stroke="#fff" stroke-width="1.1"/>
  <circle cx="91.6" cy="9" r="4" fill="#fff"/>
  <path d="M89.8,7.2 L93.4,10.8 M93.4,7.2 L89.8,10.8" stroke="#d46524" stroke-width="1.2"/>
  <path d="M112.7,4.4 L116.9,12.8 H108.5 Z" fill="#fff"/>
  <path d="M112.7,7.4 V10" stroke="#d46524" stroke-width="1.1"/><rect x="112.2" y="10.8" width="1" height="1" fill="#d46524"/>
  <path d="M140,5 L146.4,9 L140,13 Z" fill="#fff"/>
  <path d="M296,12.6 C295.8,9.5 298,7.5 299.6,4 C300.6,6.2 301.2,7.2 302.2,7.8 C303.8,8.6 304.6,10.4 304.4,12.8 L302.6,11.2 L300.4,12.9 L298.2,11.2 Z" fill="#2cbb2c"/>
  <path d="M317.2,5.6 H321 L322,6.8 H326.8 V12.8 H317.2 Z" fill="#fff"/>
  <circle cx="961.6" cy="9" r="5.3" fill="#fff" opacity="0.95"/>
  <circle cx="959.8" cy="8" r="0.8" fill="#a08070"/><circle cx="963.4" cy="8" r="0.8" fill="#a08070"/>
  <path d="M959,10.4 Q961.6,12.8 964.2,10.4" fill="none" stroke="#a08070" stroke-width="0.9"/>
  <path d="M979.8,12.4 Q981.8,10.8 982.4,7.4 Q983,4.2 984.2,4 Q985.4,4.2 986,7.4 Q986.6,10.8 988.6,12.4 Z" fill="#fff" opacity="0.9"/><rect x="983.4" y="13" width="1.5" height="1.2" fill="#fff" opacity="0.8"/>
</svg>
<span class="st" style="left:19.8px">master*</span>
<span class="st" style="left:99px">2</span>
<span class="st" style="left:121px">0</span>
<span class="st" style="left:149.5px">.NET Core Attach (DatingApp)</span>
<span class="st" style="left:329.5px">DatingApp</span>
<span class="st" style="left:388px">Auto Attach: Off</span>
<span class="st" style="left:741.4px">Ln 20, Col 60</span>
<span class="st" style="left:812.4px">Spaces: 4</span>
<span class="st" style="left:868.4px">UTF-8</span>
<span class="st" style="left:909px">LF</span>
<span class="st" style="left:931.4px">C#</span>
<span class="st" style="left:972.2px;color:rgba(255,255,255,0.42);font-size:8px;-webkit-text-stroke:0.3px">Udemy</span>

</div>
</div>

<svg width="1000" height="561" style="left:0;top:0">
  <path d="M552.6,417.2 V428 L555.2,425.6 L557.2,430 L559,429.2 L557.1,424.9 L560.6,424.7 Z" fill="#1a1a1a" stroke="#d8d8d8" stroke-width="0.9" stroke-linejoin="round"/>
</svg>

</body></html>
